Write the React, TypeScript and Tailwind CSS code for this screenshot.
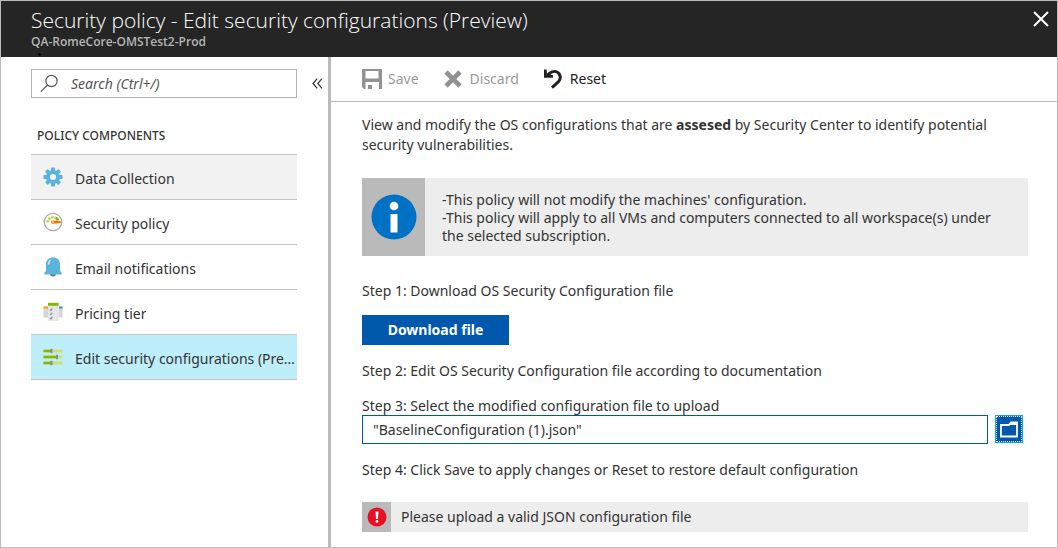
import { useState } from 'react';
import type { ReactNode } from 'react';

const GearIcon = () => (
  <svg width="20" height="20" viewBox="0 0 20 20" aria-hidden="true">
    <g fill="#59b4d9">
      {[0, 45, 90, 135].map((a) => (
        <rect key={a} x="8" y="0.5" width="4" height="19" rx="0.8" transform={`rotate(${a} 10 10)`} />
      ))}
      <circle cx="10" cy="10" r="7" />
    </g>
    <circle cx="10" cy="10" r="3" fill="#f2f2f2" />
  </svg>
);

const GaugeIcon = () => (
  <svg width="20" height="20" viewBox="0 0 20 20" aria-hidden="true">
    <circle cx="10" cy="10" r="8.7" fill="#fff" stroke="#a8a8a8" strokeWidth="1.3" />
    <path d="M4.700 10.500a5.300 5.300 0 0 1 8-4.600" fill="none" stroke="#b8d432" strokeWidth="2.400" strokeDasharray="2.400 0.800" />
    <path d="M12.800 5.900a5.500 5.500 0 0 1 2.300 2.600" fill="none" stroke="#7fba00" strokeWidth="2.600" />
    <path d="M17.700 9.200L9.600 8.500a1.600 1.600 0 0 0 0 3.200L17.700 11z" fill="#ff6a00" />
    <circle cx="10" cy="10.100" r="0.800" fill="#fff" />
  </svg>
);

const BellIcon = () => (
  <svg width="20" height="20" viewBox="0 0 20 20" aria-hidden="true">
    <path d="M7.2 17h5.6v.8a2 2 0 0 1-2 1.700H9.200a2 2 0 0 1-2-1.700z" fill="#7a7a7a" />
    <path d="M3 7.500C3 3 5.800.5 10 .5s7 2.500 7 7v6c0 1.200 1.800 1.800 1.800 3.300 0 .5-.3.700-.8.700H2c-.5 0-.8-.2-.8-.7 0-1.500 1.800-2.100 1.800-3.300z" fill="#59b4d9" />
    <path d="M4.700 7.600C4.700 4.600 6.500 2.400 9 2.200c-1.500 1-2.600 3-2.600 5.200z" fill="#fff" opacity=".75" />
  </svg>
);

const PricingIcon = () => (
  <svg width="20" height="20" viewBox="0 0 20 20" aria-hidden="true">
    <path d="M.5 4.500H5v11H.5zM15.500 4.500h4v11h-4z" fill="#d6d6d6" />
    <path d="M.5 4.500H5v2H.5z" fill="#ff9b1a" />
    <path d="M16 4.500h3.500v2H16z" fill="#3999c6" />
    <path d="M5 1h10.500v18H5z" fill="#e6e6e6" />
    <path d="M5 .8h10.500v3H5z" fill="#7fba00" />
    <path d="M7 7.500l1 1 1.300-2M7 11.700l1 1 1.300-2M7 15.900l1 1 1.300-2" fill="none" stroke="#8a8a8a" strokeWidth="1.100" />
  </svg>
);

const SlidersIcon = () => (
  <svg width="20" height="20" viewBox="0 0 20 20" aria-hidden="true">
    <path d="M.5 4h19M.5 10h19M.5 16h19" stroke="#c9df7b" strokeWidth="3" />
    <path d="M.5 4H8M.5 10h14M.5 16H8" stroke="#7fba00" strokeWidth="2.600" />
    <path d="M8.500 1.700v4.600M14 7.700v4.600M8.500 13.700v4.600" stroke="#8c8c8c" strokeWidth="2" />
  </svg>
);

const items: { label: string; icon: ReactNode; tone: string }[] = [
  { label: 'Data Collection', icon: <GearIcon />, tone: 'bg-[#f2f2f2]' },
  { label: 'Security policy', icon: <GaugeIcon />, tone: 'bg-white' },
  { label: 'Email notifications', icon: <BellIcon />, tone: 'bg-white' },
  { label: 'Pricing tier', icon: <PricingIcon />, tone: 'bg-white' },
  { label: 'Edit security configurations (Preview)', icon: <SlidersIcon />, tone: 'bg-[#beeefa]' },
];

function Sidebar() {
  return (
    <aside className="w-[330px] shrink-0 border-r-3 border-[#bbb] pl-[30px] pt-3">
      <div className="flex items-center">
        <label className="flex h-[29px] w-[266px] items-center border border-[#b3b3b3] pl-2">
          <svg width="19" height="19" viewBox="0 0 19 19" fill="none" stroke="#555" strokeWidth="1.200" aria-hidden="true">
            <circle cx="11.500" cy="7" r="5.600" />
            <path d="M7.500 11L.8 17.700" />
          </svg>
          <input
            type="search"
            aria-label="Search"
            placeholder="Search (Ctrl+/)"
            className="ml-3 min-w-0 flex-1 text-sm italic outline-none placeholder:text-[#555]"
          />
        </label>
        <button type="button" aria-label="Collapse menu" className="ml-[15px]">
          <svg width="11" height="11" viewBox="0 0 11 11" fill="none" stroke="#333" strokeWidth="1.200" aria-hidden="true">
            <path d="M5.200.7L1 5.500l4.200 4.800M10 .7L5.800 5.500 10 10.300" />
          </svg>
        </button>
      </div>
      <h2 className="mt-7 pl-1.5 text-xs leading-5 font-medium text-[#333]">POLICY COMPONENTS</h2>
      <ul className="mt-2 w-[266px] border-t border-[#c4c4c4]">
        {items.map((item) => (
          <li key={item.label} className="border-b border-[#c4c4c4]">
            <a href="#" className={`flex h-11 items-center gap-3 pl-3 ${item.tone}`}>
              <span className="shrink-0">{item.icon}</span>
              <span className="truncate pt-1">{item.label}</span>
            </a>
          </li>
        ))}
      </ul>
    </aside>
  );
}

function CommandBar() {
  return (
    <div className="flex h-[45px] items-center gap-[25px] border-b border-[#bbb] pl-[31px]">
      <button type="button" disabled className="flex items-center gap-1.5 text-[#999]">
        <svg width="20" height="20" viewBox="0 0 20 20" fill="#929292" aria-hidden="true">
          <path fillRule="evenodd" d="M1 0h18a1 1 0 0 1 1 1v19h-3v-7H3.500v7H2l-2-2V1a1 1 0 0 1 1-1zm2.500 2v7.500h13V2z" />
          <path d="M6 16h4v4H6z" />
        </svg>
        Save
      </button>
      <button type="button" disabled className="flex items-center gap-2 text-[#999]">
        <svg width="18" height="18" viewBox="0 0 18 18" stroke="#929292" strokeWidth="4.600" aria-hidden="true">
          <path d="M2 2l14 14M16 2L2 16" />
        </svg>
        Discard
      </button>
      <button type="button" className="flex items-center gap-2 text-[#222]">
        <svg width="18" height="20" viewBox="0 0 18 20" aria-hidden="true">
          <path d="M3.500 6.500C6 3 10 1.500 13 3c3.800 2 4.200 6.700 1.500 9.700L8 18.700" fill="none" stroke="#222" strokeWidth="3" />
          <path d="M0 .5h2.600l.3 3.700L9 6.200v2.600H0z" fill="#222" />
        </svg>
        Reset
      </button>
    </div>
  );
}

export default function App() {
  const [file, setFile] = useState('"BaselineConfiguration (1).json"');
  return (
    <div className="flex min-h-screen flex-col border border-[#bbb] bg-white font-['Noto_Sans','Open_Sans',sans-serif] text-sm text-[#333]">
      <header className="relative flex h-14 shrink-0 items-start justify-between bg-[#252525] pr-2 pl-[30px] font-['Open_Sans','Noto_Sans',sans-serif] text-white">
        <div className="pt-1.5">
          <h1 className="text-[21px] leading-[27px] font-light">Security policy - Edit security configurations (Preview)</h1>
          <p className="text-xs leading-4 font-semibold text-[#b5b5b5]">QA-RomeCore-OMSTest2-Prod</p>
        </div>
        <svg width="3" height="3" viewBox="0 0 3 3" className="absolute bottom-px left-[37px]" aria-hidden="true">
          <path d="M1 0h1v1h1v1H2v1H1V2H0V1h1z" fill="#000" />
        </svg>
        <button type="button" aria-label="Close" className="mt-2.5">
          <svg width="16" height="16" viewBox="0 0 16 16" stroke="#fff" strokeWidth="2" aria-hidden="true">
            <path d="M1 1l14 14M15 1L1 15" />
          </svg>
        </button>
      </header>
      <div className="flex flex-1">
        <Sidebar />
        <main className="min-w-0 flex-1">
          <CommandBar />
          <div className="pt-[13px] pr-[29px] pb-[15px] pl-[31px]">
            <p className="pr-6 leading-5">
              View and modify the OS configurations that are <b>assesed</b> by Security Center to identify potential security
              vulnerabilities.
            </p>
            <div className="mt-[23px] flex min-h-[78px] bg-[#ededed]">
              <div className="flex w-[63px] shrink-0 items-center justify-center bg-[#bababa]">
                <svg width="46" height="46" viewBox="0 0 46 46" aria-hidden="true">
                  <circle cx="23" cy="23" r="22.500" fill="#0072c6" />
                  <circle cx="23" cy="12" r="4.300" fill="#fff" />
                  <path d="M19.500 20h7v18.500h-7z" fill="#fff" />
                </svg>
              </div>
              <div className="px-[17px] pt-[13px] pb-[11px] leading-[18px]">
                <p>-This policy will not modify the machines' configuration.</p>
                <p>-This policy will apply to all VMs and computers connected to all workspace(s) under the selected subscription.</p>
              </div>
            </div>
            <p className="mt-[25px] leading-5">Step 1: Download OS Security Configuration file</p>
            <button type="button" className="mt-3.5 block h-[30px] w-[147px] bg-[#0058ad] font-bold text-white">
              Download file
            </button>
            <p className="mt-4 leading-5">Step 2: Edit OS Security Configuration file according to documentation</p>
            <label htmlFor="config-file" className="mt-4 block leading-[18px]">
              Step 3: Select the modified configuration file to upload
            </label>
            <div className="flex gap-[7px] pr-[5px]">
              <input
                id="config-file"
                type="text"
                value={file}
                onChange={(e) => setFile(e.target.value)}
                className="h-[29px] min-w-0 flex-1 border border-[#0058ad] px-2.5 outline-none"
              />
              <button
                type="button"
                aria-label="Browse for file"
                className="flex size-7 items-center justify-center border border-[#00abec] bg-[#0058ad] outline-1 -outline-offset-2 outline-dotted outline-white"
              >
                <svg width="18" height="17" viewBox="0 0 18 17" aria-hidden="true">
                  <path d="M1 4h8l2-2.500h6v14H1z" fill="#0058ad" stroke="#fff" strokeWidth="1.800" />
                  <path d="M9 4l2-3h6v3z" fill="#fff" />
                </svg>
              </button>
            </div>
            <p className="mt-4 leading-5">Step 4: Click Save to apply changes or Reset to restore default configuration</p>
            <div role="alert" className="mt-[22px] flex h-[30px] items-center bg-[#ededed]">
              <span className="flex h-full w-[29px] shrink-0 items-center justify-center bg-[#bababa]">
                <svg width="20" height="20" viewBox="0 0 20 20" aria-hidden="true">
                  <circle cx="10" cy="10" r="9.500" fill="#e81123" />
                  <path d="M8.500 4.500h3l-.5 7.500H9z" fill="#fff" />
                  <circle cx="10" cy="14.400" r="1.400" fill="#fff" />
                </svg>
              </span>
              <span className="pl-2.5">Please upload a valid JSON configuration file</span>
            </div>
          </div>
        </main>
      </div>
    </div>
  );
}
